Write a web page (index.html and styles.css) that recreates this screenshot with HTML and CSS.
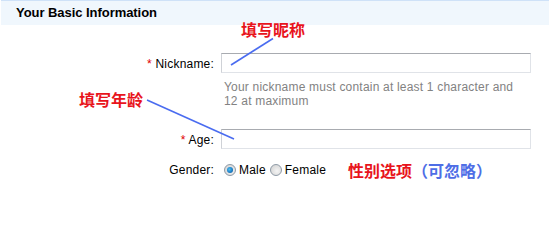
FILE: index.html
```html
<!DOCTYPE html>
<html>
<head>
<meta charset="utf-8">
<link rel="stylesheet" href="styles.css">
</head>
<body>
<div class="page">
  <div class="header">Your Basic Information</div>
  <div class="form">
    <div class="row row-nick">
      <label class="label"><span class="req">*</span> Nickname:</label>
      <div class="field"><div class="input"></div></div>
    </div>
    <div class="row row-help">
      <div class="label"></div>
      <div class="help">Your nickname must contain at least 1 character and 12 at maximum</div>
    </div>
    <div class="row row-age">
      <label class="label"><span class="req">*</span> Age:</label>
      <div class="field"><div class="input"></div></div>
    </div>
    <div class="row row-gender">
      <label class="label">Gender:</label>
      <div class="radios">
        <span class="radio checked"></span><span class="rlabel">Male</span>
        <span class="radio"></span><span class="rlabel">Female</span>
      </div>
    </div>
  </div>
  <span class="note note-nick">填写昵称</span>
  <span class="note note-age">填写年龄</span>
  <span class="note note-gender">性别选项<span class="blue">（可忽略）</span></span>
  <svg class="lines" width="549" height="200" viewBox="0 0 549 200">
    <line x1="273" y1="38.5" x2="231" y2="65" stroke="#4a6cf0" stroke-width="1.6"/>
    <line x1="147" y1="100" x2="234" y2="139" stroke="#4a6cf0" stroke-width="1.6"/>
  </svg>
</div>
</body>
</html>
```
FILE: styles.css
```css
html, body {
  margin: 0;
  padding: 0;
  background: #ffffff;
}
.page {
  position: relative;
  width: 549px;
  height: 200px;
  overflow: hidden;
  font-family: "Liberation Sans", Arial, sans-serif;
  font-size: 12px;
  color: #000;
}
.header {
  border-top: 1px solid #cfe2f8;
  background: #f0f7fd;
  height: 24px;
  line-height: 24px;
  padding-left: 15px;
  font-weight: bold;
  font-size: 13px;
  letter-spacing: -0.05px;
  color: #000;
  margin-left: 1px;
}
.form {
  padding-top: 28px;
}
.row {
  display: flex;
  align-items: center;
}
.label {
  width: 214px;
  text-align: right;
  flex: none;
  letter-spacing: 0.2px;
}
.req {
  color: #e00000;
}
.field {
  margin-left: 7px;
}
.input {
  box-sizing: border-box;
  width: 310px;
  height: 20px;
  border: 1px solid #e0e3e8;
  border-top-color: #a8abb0;
  border-left-color: #cfd2d7;
  background: #fff;
}
.row-nick .label {
  padding-top: 2px;
}
.row-help {
  align-items: flex-start;
  margin-top: 7px;
}
.help {
  margin-left: 10px;
  width: 300px;
  color: #828282;
  line-height: 14px;
  letter-spacing: 0.2px;
}
.row-age {
  margin-top: 21px;
}
.row-age .label {
  padding-top: 2px;
}
.row-gender {
  margin-top: 14px;
}
.radios {
  display: flex;
  align-items: center;
  margin-left: 10px;
  letter-spacing: 0.2px;
}
.radio {
  box-sizing: border-box;
  width: 12px;
  height: 12px;
  border-radius: 50%;
  border: 1px solid #8e9aa6;
  background: radial-gradient(circle at 60% 60%, #f4f4f4 0%, #dadada 70%, #c8c8c8 100%);
  position: relative;
}
.radio.checked::after {
  content: "";
  position: absolute;
  left: 2px;
  top: 2px;
  width: 6px;
  height: 6px;
  border-radius: 50%;
  background: radial-gradient(circle at 40% 40%, #4fc0f0 0%, #1d7fc8 55%, #0b4f8a 100%);
}
.rlabel {
  margin-left: 3px;
  margin-right: 4px;
}
.note {
  position: absolute;
  font-family: "Noto Sans CJK SC", sans-serif;
  font-weight: bold;
  font-size: 16px;
  line-height: 16px;
  color: #e8141c;
  white-space: nowrap;
}
.blue {
  color: #4e6ee6;
}
.note-nick {
  left: 241px;
  top: 21px;
}
.note-age {
  left: 79px;
  top: 91px;
}
.note-gender {
  left: 348px;
  top: 162px;
}
.lines {
  position: absolute;
  left: 0;
  top: 0;
  pointer-events: none;
}
```
